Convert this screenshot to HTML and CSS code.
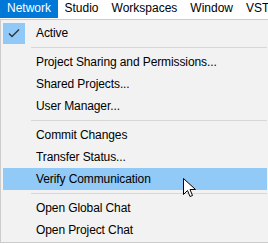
FILE: index.html
```html
<!DOCTYPE html>
<html lang="en">
  <head>
    <meta charset="UTF-8" />
    <title>Network menu</title>
    <link rel="stylesheet" href="styles.css">
  </head>
  <body>
    <div class="menubar">
      <span class="top-item open">Network</span>
      <span class="top-item">Studio</span>
      <span class="top-item">Workspaces</span>
      <span class="top-item">Window</span>
      <span class="top-item">VST</span>
    </div>
    <div class="dropdown">
      <div class="item">
        <span class="check">
          <svg width="22" height="21" viewBox="0 0 22 21">
            <path d="M6 10.5 L9 13.5 L16 6.5" fill="none" stroke="#333" stroke-width="1.4" />
          </svg>
        </span>
        <span class="label">Active</span>
      </div>
      <div class="sep"></div>
      <div class="item"><span class="check"></span><span class="label">Project Sharing and Permissions...</span></div>
      <div class="item"><span class="check"></span><span class="label">Shared Projects...</span></div>
      <div class="item"><span class="check"></span><span class="label">User Manager...</span></div>
      <div class="sep"></div>
      <div class="item"><span class="check"></span><span class="label">Commit Changes</span></div>
      <div class="item"><span class="check"></span><span class="label">Transfer Status...</span></div>
      <div class="item hover"><span class="check"></span><span class="label">Verify Communication</span></div>
      <div class="sep"></div>
      <div class="item"><span class="check"></span><span class="label">Open Global Chat</span></div>
      <div class="item"><span class="check"></span><span class="label">Open Project Chat</span></div>
    </div>

    <svg class="cursor" width="14" height="22" viewBox="0 0 14 22">
      <path d="M0.5 0.5 L0.5 16.5 L4.5 12.5 L7 18.5 L9.5 17.5 L7 11.5 L12.5 11.5 Z" fill="#fff" stroke="#000" stroke-width="1" />
    </svg>
  </body>
</html>
```

FILE: styles.css
```css
body {
  margin: 0;
  background: #ffffff;
  font-family: "Liberation Sans", Arial, sans-serif;
  font-size: 12px;
  color: #000;
  position: relative;
}
.menubar {
  display: flex;
  height: 19px;
  background: #fff;
  white-space: nowrap;
  overflow: hidden;
}
.top-item {
  padding: 0 6.5px;
  line-height: 17px;
  height: 18px;
}
.top-item.open {
  padding: 0 7px;
  background: #0078d7;
  color: #fff;
}
.dropdown {
  width: 264px;
  border: 1px solid #cccccc;
  background: #f2f2f2;
  padding: 2px 1px 1px 2px;
}
.item {
  display: flex;
  align-items: center;
  height: 22px;
}
.item.hover {
  background: #91c9f7;
}
.check {
  width: 22px;
  height: 21px;
  margin-right: 11px;
  display: flex;
}
.item:first-child .check {
  background: #90c8f7;
}
.label {
  letter-spacing: -0.1px;
}
.sep {
  height: 1px;
  background: #d7d7d7;
  margin: 3px 0 3px 28px;
}
.cursor {
  position: absolute;
  left: 183px;
  top: 178px;
}
```
